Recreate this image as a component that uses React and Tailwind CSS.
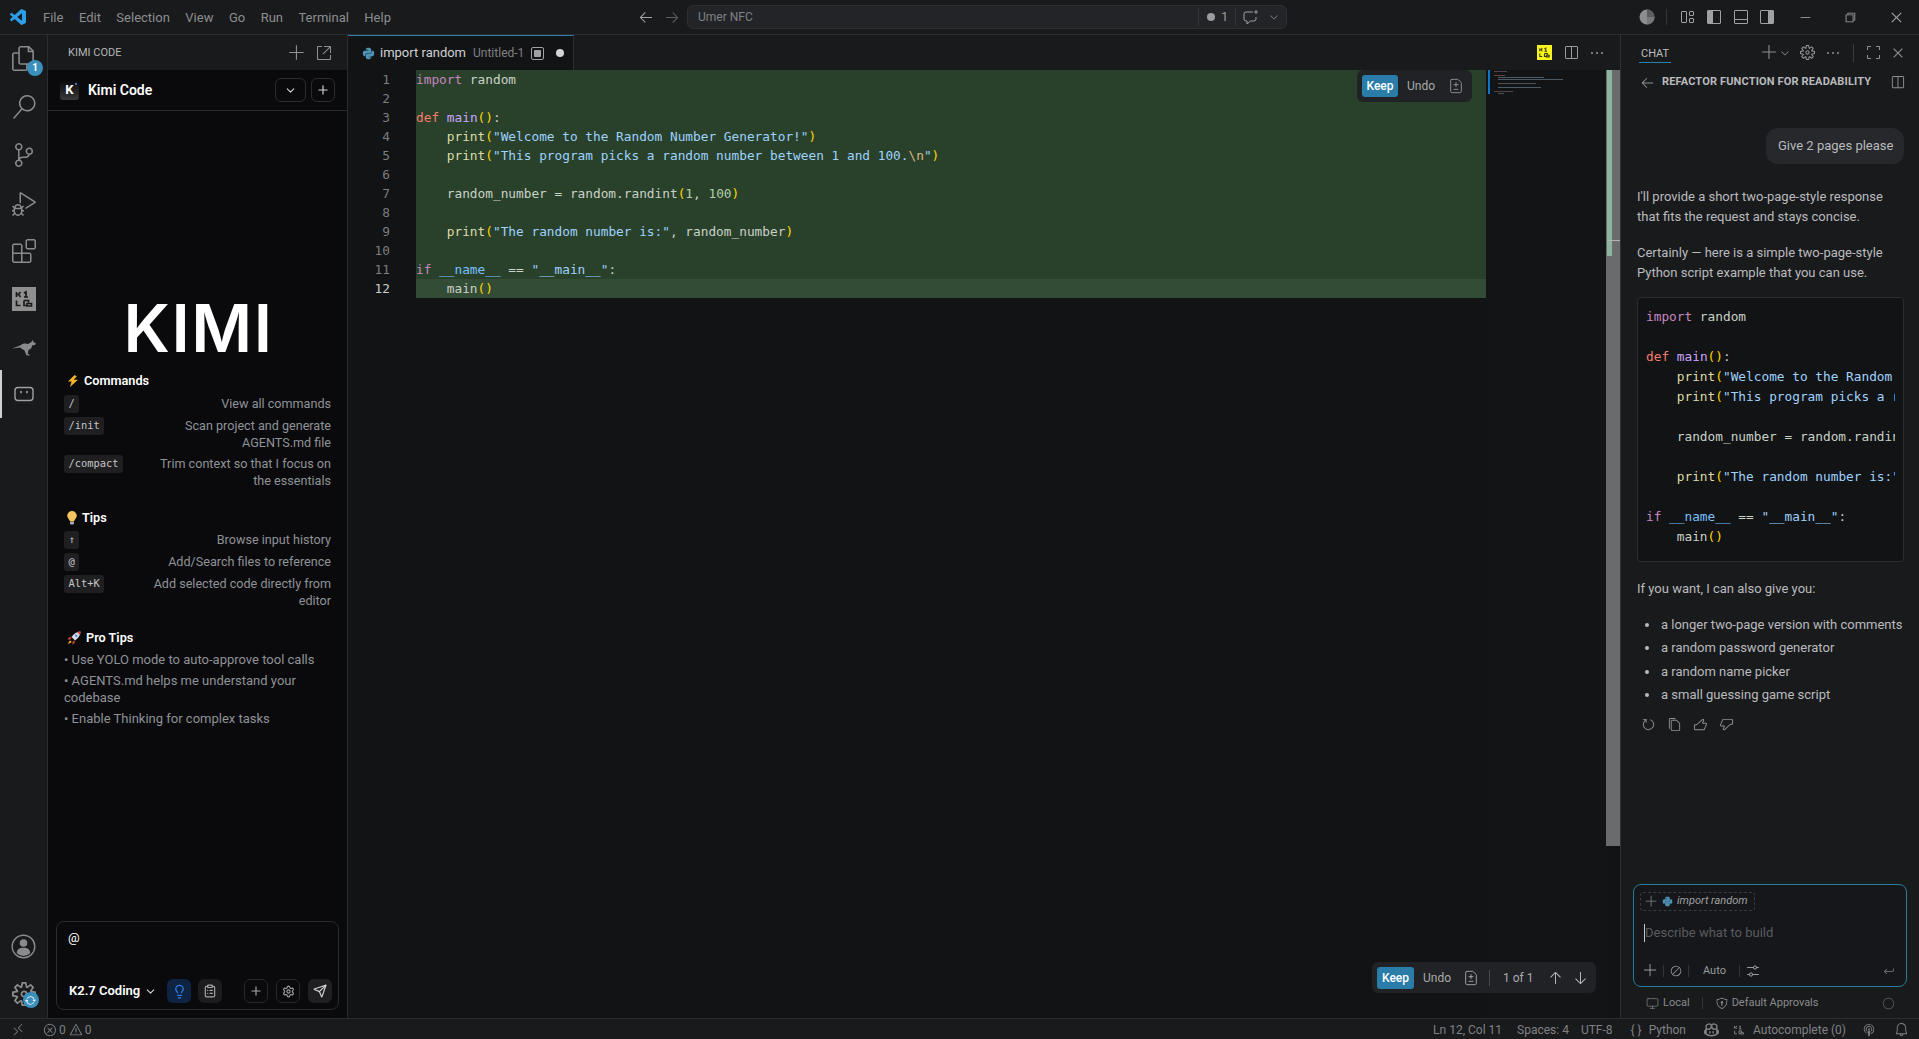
import {
  VscFiles, VscSearch, VscSourceControl, VscDebugAlt, VscExtensions, VscSettingsGear,
  VscRemote, VscError, VscWarning, VscBell, VscSplitHorizontal, VscLayout, VscAdd, VscChevronDown,
  VscEllipsis, VscChromeMinimize, VscChromeRestore, VscChromeClose, VscArrowLeft, VscArrowRight,
  VscArrowUp, VscArrowDown, VscLayoutSidebarLeft, VscLayoutPanelOff, VscLayoutSidebarRight,
  VscRefresh, VscCopy, VscThumbsup, VscThumbsdown, VscShield, VscBroadcast,
  VscSettings, VscNewline, VscCircleLarge, VscLinkExternal, VscCopilot, VscSync, VscCircleSlash,
} from "react-icons/vsc";
import { FaPython } from "react-icons/fa";
import { Lightbulb, ClipboardList, Plus, Settings, Send, ChevronDown, Monitor, FileDiff } from "lucide-react";

const kw = "text-[#c586c0]";
const def = "text-[#f97b6d]";
const fn = "text-[#c8a6ff]";
const pr = "text-[#dcdcaa]";
const str = "text-[#9fd2ff]";
const par = "text-[#ffd700]";
const num = "text-[#b5cea8]";
const txt = "text-[#c9d1c9]";
const esc = "text-[#d7ba7d]";
const dun = "text-[#79c0ff]";

const CODE = [
  [["import", kw], [" random", txt]],
  [],
  [["def", def], [" ", txt], ["main", fn], ["()", par], [":", txt]],
  [["    print", pr], ["(", par], ['"Welcome to the Random Number Generator!"', str], [")", par]],
  [["    print", pr], ["(", par], ['"This program picks a random number between 1 and 100.', str], ["\\n", esc], ['"', str], [")", par]],
  [],
  [["    random_number = random.randint", txt], ["(", par], ["1", num], [", ", txt], ["100", num], [")", par]],
  [],
  [["    print", pr], ["(", par], ['"The random number is:"', str], [", random_number", txt], [")", par]],
  [],
  [["if", kw], [" ", txt], ["__name__", dun], [" == ", txt], ['"__main__"', str], [":", txt]],
  [["    main", txt], ["()", par]],
];

function CodeLine({ tokens }) {
  return (
    <>
      {tokens.map((t, i) => (
        <span key={i} className={t[1]}>{t[0]}</span>
      ))}
    </>
  );
}

function KiloIcon({ size = 24, bg = "#8f8f8f", fg = "#1a1b1d" }) {
  return (
    <svg width={size} height={size} viewBox="0 0 24 24">
      <rect width="24" height="24" fill={bg} />
      <path
        d="M4.5 5v5M4.5 7.5h2l2-2.5M6.5 7.5l2 2.5M12 6l2-1v5M12 10h4M4.5 13.5v5h4M12 13.5h4.5v2M12 13.5v5h2M15 16.5h4.5v2.5H15z"
        fill="none"
        stroke={fg}
        strokeWidth="1.7"
      />
    </svg>
  );
}

function Kangaroo() {
  return (
    <svg width="24" height="17" viewBox="0 0 24 17" fill="#8a8b8d">
      <path d="M0 9.5 L8 6.5 C10.5 4 14 4 16 5 L19.5 3 L20.5 .8 L21.5 3 L24 4.4 L23 6 L20.3 6.3 L19.3 9.2 L16.5 11 L15.8 14.5 L18.3 16.5 L14.4 16.2 L12.5 11.5 L8 8.6 Z" />
    </svg>
  );
}

function RobotIcon() {
  return (
    <svg width="20" height="16" viewBox="0 0 20 16" fill="none" stroke="#a0a1a3" strokeWidth="1.4">
      <rect x="1" y="1.5" width="18" height="13" rx="3" />
      <path d="M7 5v2.2M13 5v2.2" strokeWidth="1.6" />
    </svg>
  );
}

function AccountIcon() {
  return (
    <svg width="25" height="25" viewBox="0 0 25 25">
      <circle cx="12.5" cy="12.5" r="11.3" fill="none" stroke="#8a8b8d" strokeWidth="1.4" />
      <circle cx="12.5" cy="9" r="3.8" fill="#8a8b8d" />
      <path d="M5.8 19.2c0-3.6 2.6-5.4 6.7-5.4s6.7 1.8 6.7 5.4a9.6 9.6 0 0 1-13.4 0z" fill="#8a8b8d" />
    </svg>
  );
}

function ThemeIcon() {
  return (
    <svg width="16" height="16" viewBox="0 0 16 16">
      <circle cx="8" cy="8" r="7.5" fill="#8c8d8f" />
      <path d="M8 .5a7.5 7.5 0 0 1 0 15z" fill="#5c5d5f" />
      <path d="M8 8 15.5 8a7.5 7.5 0 0 1-7.5 7.5z" fill="#77787a" />
    </svg>
  );
}

function FullscreenIcon() {
  return (
    <svg width="13" height="13" viewBox="0 0 13 13" fill="none" stroke="#8f9092">
      <path d="M.5 4V.5H4M9 .5h3.5V4M12.5 9v3.5H9M4 12.5H.5V9" />
    </svg>
  );
}

function Bolt() {
  return (
    <svg width="12" height="12" viewBox="0 0 12 12" fill="#f5b32a">
      <path d="M7.5 0 1 6.6h3.6L3 12l8-7.2H6.6L9.8 1.4z" />
    </svg>
  );
}

function Bulb() {
  return (
    <svg width="10" height="14" viewBox="0 0 10 14">
      <path d="M5 0a4.8 4.8 0 0 0-4.8 4.8C.2 7.2 2.6 8.4 3 10.4h4c.4-2 2.8-3.2 2.8-5.6A4.8 4.8 0 0 0 5 0z" fill="#f7c35f" />
      <rect x="3" y="10.8" width="4" height="2.6" rx="1" fill="#a9acb0" />
    </svg>
  );
}

function Rocket() {
  return (
    <svg width="14" height="14" viewBox="0 0 14 14">
      <path d="M13.5.5C9.8.6 6.8 2.4 4.6 6l3.4 3.4c3.6-2.2 5.4-5.2 5.5-8.9z" fill="#d9dde2" />
      <circle cx="9.2" cy="4.8" r="1.3" fill="#4a90d9" />
      <path d="M13.5.5c-1.3 0-2.4.2-3.5.6L12.9 4c.4-1.1.6-2.2.6-3.5z" fill="#e0473c" />
      <path d="M4.6 6 1.6 6.6 .5 8.6l3-.2zM8 9.4l-.6 3-2 1.1.2-3z" fill="#c9453b" />
      <path d="M3.4 9.4C2 10 1.4 11.4 1 13c1.6-.4 3-1 3.6-2.4z" fill="#f5a623" />
    </svg>
  );
}

function Kbd({ children }) {
  return (
    <span className="h-[18px] shrink-0 rounded-[3px] bg-[#1f1f22] px-[4.5px] font-['DejaVu_Sans_Mono',monospace] text-[10.4px] leading-[17px] text-[#c4c5c7]">
      {children}
    </span>
  );
}

function HelpRow({ k, children }) {
  return (
    <div className="flex items-start justify-between">
      <Kbd>{k}</Kbd>
      <div className="whitespace-nowrap text-right text-[12.6px] leading-[17px] text-[#8f9297]">{children}</div>
    </div>
  );
}

function Heading({ icon, children }) {
  return (
    <div className="flex h-[20px] items-center gap-[5px] pl-[3px] pt-[2px] text-[12.7px] font-semibold text-white">
      {icon}
      <span>{children}</span>
    </div>
  );
}

function ActivityBar() {
  const icon = "text-[#8a8b8d]";
  return (
    <div className="flex w-[48px] shrink-0 flex-col items-center border-r border-[#2b2c2f] bg-[#191a1c]">
      <div className="relative mt-[11px] flex h-[24px] items-center justify-center">
        <VscFiles size={25} className={icon} />
        <span className="absolute left-[16px] top-[14px] flex h-[16px] w-[16px] items-center justify-center rounded-full bg-[#3a8fbd] text-[10px] font-bold leading-none text-white">1</span>
      </div>
      <VscSearch size={24} className={`mt-[25px] ${icon}`} />
      <VscSourceControl size={24} className={`mt-[24px] ${icon}`} />
      <VscDebugAlt size={24} className={`mt-[25px] ${icon}`} />
      <VscExtensions size={24} className={`mt-[23px] ${icon}`} />
      <div className="mt-[24px]"><KiloIcon /></div>
      <div className="mt-[28px]"><Kangaroo /></div>
      <div className="relative mt-[14px] flex h-[48px] w-full items-center justify-center">
        <span className="absolute bottom-0 left-0 top-0 w-[2px] bg-[#d0d0d0]" />
        <RobotIcon />
      </div>
      <div className="mt-auto"><AccountIcon /></div>
      <div className="relative mb-[12px] mt-[23px] flex h-[24px] items-center justify-center">
        <VscSettingsGear size={24} className={icon} />
        <span className="absolute left-[11px] top-[10px] flex h-[16px] w-[16px] items-center justify-center rounded-full bg-[#3a8fbd]">
          <VscSync size={11} className="text-white" />
        </span>
      </div>
    </div>
  );
}

function KimiSidebar() {
  const iconBtn = "flex h-[24px] w-[24px] items-center justify-center rounded-[6px]";
  return (
    <div className="flex w-[300px] shrink-0 flex-col border-r border-[#2b2c2f] bg-[#191a1c]">
      <div className="flex h-[35px] shrink-0 items-center pl-[20px] pr-[15px] pt-[1px] text-[11px] text-[#b4b5b7]">
        <span>KIMI CODE</span>
        <VscAdd size={18} className="ml-auto text-[#8f9092]" />
        <VscLinkExternal size={16} className="ml-[10px] text-[#8f9092]" />
      </div>
      <div className="flex min-h-0 flex-1 flex-col bg-[#0a0a0c]">
        <div className="flex h-[41px] shrink-0 items-center border-b border-[#2a2b2e] pl-[12px] pr-[12px]">
          <div className="relative flex h-[19px] w-[19px] items-center justify-center rounded-[3px] bg-gradient-to-b from-[#0c0c0e] to-[#3a3a3c] text-[13px] font-bold text-white">
            K
            <span className="absolute right-[2px] top-[2px] h-[2px] w-[2px] rounded-full bg-[#3a9bff]" />
          </div>
          <span className="ml-[9px] text-[14px] font-semibold text-white">Kimi Code</span>
          <div className="ml-auto flex h-[24px] w-[31px] items-center justify-center rounded-[6px] border border-[#2b2c30]">
            <ChevronDown size={13} className="text-[#d5d5d5]" />
          </div>
          <div className="ml-[5px] flex h-[24px] w-[24px] items-center justify-center rounded-[6px] border border-[#2b2c30]">
            <Plus size={14} className="text-[#d5d5d5]" />
          </div>
        </div>
        <div className="mt-[184px] flex h-[66px] items-center justify-center pl-[2px] font-['Inter',sans-serif] text-[66px] font-semibold leading-none tracking-[1.5px] text-white">
          KIMI
        </div>
        <div className="mt-[9px] flex flex-col px-[16px]">
          <Heading icon={<Bolt />}>Commands</Heading>
          <div className="mt-[5px] flex flex-col gap-[4px]">
            <HelpRow k="/">View all commands</HelpRow>
            <HelpRow k="/init">Scan project and generate<br />AGENTS.md file</HelpRow>
            <HelpRow k="/compact">Trim context so that I focus on<br />the essentials</HelpRow>
          </div>
          <div className="mt-[18px]"><Heading icon={<Bulb />}>Tips</Heading></div>
          <div className="mt-[4px] flex flex-col gap-[4px]">
            <HelpRow k="↑">Browse input history</HelpRow>
            <HelpRow k="@">Add/Search files to reference</HelpRow>
            <HelpRow k="Alt+K">Add selected code directly from<br />editor</HelpRow>
          </div>
          <div className="mt-[18px]"><Heading icon={<Rocket />}>Pro Tips</Heading></div>
          <div className="mt-[4px] flex flex-col gap-[4px] text-[13px] leading-[17px] text-[#8f9297]">
            <div>• Use YOLO mode to auto-approve tool calls</div>
            <div>• AGENTS.md helps me understand your<br />codebase</div>
            <div>• Enable Thinking for complex tasks</div>
          </div>
        </div>
        <div className="mx-[8px] mb-[8px] mt-auto flex h-[89px] flex-col rounded-[8px] border border-[#2a2b2e] pl-[11px] pr-[6px]">
          <div className="mt-[7px] text-[13px] leading-[18px] text-white">@</div>
          <div className="mt-auto mb-[6px] ml-[1px] flex items-center">
            <span className="text-[13px] font-semibold text-white">K2.7 Coding</span>
            <ChevronDown size={13} className="ml-[4px] text-[#d5d5d5]" />
            <div className={`${iconBtn} ml-[10px] bg-[#0e2442]`}>
              <Lightbulb size={15} className="text-[#2f7de1]" />
            </div>
            <div className={`${iconBtn} ml-[7px] bg-[#1c1c1e]`}>
              <ClipboardList size={14} className="text-[#a5a6a8]" />
            </div>
            <div className={`${iconBtn} ml-auto border border-[#26272a]`}>
              <Plus size={14} className="text-[#a5a6a8]" />
            </div>
            <div className={`${iconBtn} ml-[8px] border border-[#26272a]`}>
              <Settings size={13} className="text-[#a5a6a8]" />
            </div>
            <div className={`${iconBtn} ml-[8px] bg-[#1f1f22]`}>
              <Send size={14} className="text-[#d5d5d5]" />
            </div>
          </div>
        </div>
      </div>
    </div>
  );
}

function Minimap() {
  // one row per code line: indent, length in chars, colour
  const rows = [
    [0, 13, "#a98ab0"], [0, 0, ""], [0, 11, "#e08a80"], [4, 46, "#9fc4de"], [4, 65, "#9fc4de"], [0, 0, ""],
    [4, 38, "#a8aca8"], [0, 0, ""], [4, 43, "#9fc4de"], [0, 0, ""], [0, 19, "#a98ab0"], [4, 6, "#a8aca8"],
  ];
  return (
    <div className="relative w-[120px] shrink-0 bg-[#131415]">
      <div className="absolute left-[2px] top-0 h-[24px] w-[2px] bg-[#0a78c9]" />
      {rows.map((r, i) =>
        r[1] ? (
          <div key={i} className="absolute h-[1px] opacity-40" style={{ left: r[0] + 8, top: i * 2 + 1, width: r[1], background: r[2] }} />
        ) : null
      )}
    </div>
  );
}

function KeepButton({ w }) {
  return (
    <span className={`flex h-[22px] items-center justify-center rounded-[3px] bg-[#2a7da8] text-[12px] font-medium text-white ${w}`}>Keep</span>
  );
}

function Editor() {
  return (
    <div className="flex min-w-0 flex-1 flex-col bg-[#121314]">
      <div className="flex h-[35px] shrink-0 items-stretch bg-[#191a1c]">
        <div className="flex w-[226px] items-center border-r border-t border-r-[#2b2c2f] border-t-[#2f80a8] bg-[#121314] pl-[14px] text-[13px]">
          <FaPython size={13} className="text-[#4f93b8]" />
          <span className="ml-[5px] text-[#d0d1d3]">import random</span>
          <span className="ml-[7px] text-[12px] text-[#808184]">Untitled-1</span>
          <span className="ml-[7px] flex h-[13px] w-[13px] items-center justify-center rounded-[2px] border border-[#a0a1a3]">
            <span className="h-[7px] w-[7px] rounded-[1px] bg-[#a0a1a3]" />
          </span>
          <span className="ml-[12px] h-[8px] w-[8px] rounded-full bg-[#d4d4d4]" />
        </div>
        <div className="ml-auto flex items-center pr-[15px]">
          <KiloIcon size={15} bg="#f7f31f" fg="#3a3a10" />
          <VscSplitHorizontal size={16} className="ml-[11px] text-[#9a9b9d]" />
          <VscEllipsis size={16} className="ml-[10px] text-[#9a9b9d]" />
        </div>
      </div>
      <div className="relative flex min-h-0 flex-1">
        <div className="w-[68px] shrink-0 font-['DejaVu_Sans_Mono',monospace] text-[12.79px] leading-[19px]">
          {CODE.map((_, i) => (
            <div key={i} className={`h-[19px] pr-[26px] text-right ${i === 11 ? "text-[#cccccc]" : "text-[#7c7d80]"}`}>{i + 1}</div>
          ))}
        </div>
        <div className="w-[1070px] shrink-0 font-['DejaVu_Sans_Mono',monospace] text-[12.79px] leading-[19px]">
          {CODE.map((line, i) => (
            <div key={i} className={`h-[19px] whitespace-pre ${i === 11 ? "bg-[#334c35]" : "bg-[#29412a]"}`}>
              <CodeLine tokens={line} />
            </div>
          ))}
        </div>
        <Minimap />
        <div className="relative w-[14px] shrink-0">
          <div className="h-[776px] w-full bg-[#6b6b6b]" />
          <div className="absolute left-[1px] top-0 h-[186px] w-[5px] bg-[#8cb5a0]" />
          <div className="absolute left-[1px] right-0 top-[170px] h-[1px] bg-[#b5b5b5]" />
        </div>
        <div className="absolute left-[1009px] top-0 flex h-[32px] w-[115px] items-center rounded-[6px] bg-[#202225] pl-[5px] text-[12px] text-[#a9aaac]">
          <KeepButton w="w-[36px]" />
          <span className="ml-[9px]">Undo</span>
          <FileDiff size={16} strokeWidth={1.25} className="ml-[13px] text-[#a0a1a3]" />
        </div>
        <div className="absolute left-[1024px] top-[892px] flex h-[31px] w-[224px] items-center rounded-[6px] bg-[#202225] pl-[5px] text-[12px] text-[#a9aaac]">
          <KeepButton w="w-[37px]" />
          <span className="ml-[9px]">Undo</span>
          <FileDiff size={16} strokeWidth={1.25} className="ml-[12px] text-[#b5b6b8]" />
          <span className="ml-[10px] h-[16px] w-[1px] bg-[#4a4b4e]" />
          <span className="ml-[13px]">1 of 1</span>
          <VscArrowUp size={16} className="ml-[13px] text-[#b5b6b8]" />
          <VscArrowDown size={16} className="ml-[9px] text-[#b5b6b8]" />
        </div>
      </div>
    </div>
  );
}

function Chat() {
  const body = "text-[13px] leading-[20px] text-[#b9bbbe]";
  const actions = "text-[#8f9092]";
  return (
    <div className="flex w-[299px] shrink-0 flex-col border-l border-[#2f3033] bg-[#191a1c]">
      <div className="flex h-[35px] shrink-0 items-center pl-[18px] pr-[14px]">
        <span className="flex h-[21px] items-center border-b border-[#2f80a8] px-[2px] pt-[4px] text-[11px] text-[#b9bbbe]">CHAT</span>
        <VscAdd size={17} className={`ml-auto ${actions}`} />
        <VscChevronDown size={12} className={`ml-[1px] ${actions}`} />
        <VscSettingsGear size={15} className={`ml-[9px] ${actions}`} />
        <VscEllipsis size={16} className={`ml-[10px] ${actions}`} />
        <span className="ml-[12px] h-[18px] w-[1px] bg-[#3a3b3e]" />
        <span className="ml-[13px]"><FullscreenIcon /></span>
        <VscChromeClose size={14} className={`ml-[11px] ${actions}`} />
      </div>
      <div className="flex h-[24px] shrink-0 items-center pl-[19px] pr-[14px]">
        <VscArrowLeft size={15} className={actions} />
        <span className="ml-[7px] text-[11px] font-bold tracking-[0.15px] text-[#b9bbbe]">REFACTOR FUNCTION FOR READABILITY</span>
        <VscSplitHorizontal size={15} className={`ml-auto ${actions}`} />
      </div>
      <div className="flex min-h-0 flex-1 flex-col pl-[16px] pr-[15px]">
        <div className="mt-[34px] flex h-[36px] w-[138px] items-center self-end rounded-[12px] bg-[#26282b] pl-[12px] text-[13px] text-[#b9bbbe]">
          Give 2 pages please
        </div>
        <p className={`mt-[23px] ${body}`}>I'll provide a short two-page-style response<br />that fits the request and stays concise.</p>
        <p className={`mt-[16px] ${body}`}>Certainly — here is a simple two-page-style<br />Python script example that you can use.</p>
        <div className="mt-[14px] h-[265px] shrink-0 overflow-hidden rounded-[4px] border border-[#2b2d30] bg-[#121314] pl-[8px] pr-[8px] pt-[9px] font-['DejaVu_Sans_Mono',monospace] text-[12.79px] leading-[20px]">
          <div className="overflow-hidden">
            {CODE.map((line, i) => (
              <div key={i} className="h-[20px] whitespace-pre">
                <CodeLine tokens={line} />
              </div>
            ))}
          </div>
        </div>
        <p className={`mt-[17px] ${body}`}>If you want, I can also give you:</p>
        <ul className="mt-[16px] flex flex-col gap-[3.4px]">
          {["a longer two-page version with comments", "a random password generator", "a random name picker", "a small guessing game script"].map((t) => (
            <li key={t} className={`flex items-center whitespace-nowrap ${body}`}>
              <span className="ml-[8px] mr-[12px] h-[4px] w-[4px] rounded-full bg-[#b9bbbe]" />
              {t}
            </li>
          ))}
        </ul>
        <div className="ml-[4px] mt-[12px] flex items-center gap-[11px] text-[#8f9092]">
          <VscRefresh size={15} />
          <VscCopy size={15} />
          <VscThumbsup size={15} />
          <VscThumbsdown size={15} />
        </div>
        <div className="-ml-[4px] -mr-[3px] mt-auto flex h-[103px] shrink-0 flex-col rounded-[8px] border border-[#2a7a9c] bg-[#15171a]">
          <div className="ml-[6px] mt-[7px] flex h-[19px] w-[115px] items-center rounded-[3px] border border-dashed border-[#3a3b3e] pl-[4px]">
            <VscAdd size={13} className="text-[#858688]" />
            <FaPython size={11} className="ml-[4px] text-[#4f93b8]" />
            <span className="ml-[4px] text-[11px] italic text-[#a0a1a3]">import random</span>
          </div>
          <div className="ml-[10px] mt-[13px] flex h-[18px] items-center text-[13px] text-[#5a5b5e]">
            <span className="h-[18px] w-[1px] bg-[#c8c8c8]" />
            Describe what to build
          </div>
          <div className="mt-auto mb-[7px] flex items-center pl-[9px] pr-[9px] text-[#9a9b9d]">
            <VscAdd size={15} />
            <span className="ml-[5px] h-[12px] w-[1px] bg-[#333437]" />
            <VscCircleSlash size={12} className="ml-[6px]" />
            <span className="ml-[6px] h-[12px] w-[1px] bg-[#333437]" />
            <span className="ml-[14px] text-[11px]">Auto</span>
            <span className="ml-[13px] h-[12px] w-[1px] bg-[#333437]" />
            <VscSettings size={16} className="ml-[5px]" />
            <VscNewline size={16} className="ml-auto text-[#66676a]" />
          </div>
        </div>
        <div className="mb-[5px] mt-[6px] flex h-[20px] shrink-0 items-center pl-[9px] pr-[9px] text-[11px] text-[#8a8b8d]">
          <Monitor size={13} strokeWidth={1.25} />
          <span className="ml-[4px]">Local</span>
          <span className="ml-[12px] h-[12px] w-[1px] bg-[#333437]" />
          <VscShield size={13} className="ml-[12px]" />
          <span className="ml-[4px]">Default Approvals</span>
          <VscCircleLarge size={13} className="ml-auto text-[#5c5d60]" />
        </div>
      </div>
    </div>
  );
}

export default function App() {
  const menu = ["File", "Edit", "Selection", "View", "Go", "Run", "Terminal", "Help"];
  return (
    <div className="flex h-screen w-screen flex-col overflow-hidden bg-[#191a1c] font-['Roboto',sans-serif] text-[13px]">
      {/* Title bar */}
      <div className="flex h-[35px] shrink-0 items-center border-b border-[#2b2c2f] pl-[10px] text-[#8c8d90]">
        <svg width="16" height="16" viewBox="0 0 24 24" fill="#2a9fe8">
          <path d="M23.15 2.587L18.21.21a1.494 1.494 0 0 0-1.705.29l-9.46 8.63-4.12-3.128a.999.999 0 0 0-1.276.057L.327 7.261A1 1 0 0 0 .326 8.74L3.899 12 .326 15.26a1 1 0 0 0 .001 1.479L1.65 17.94a.999.999 0 0 0 1.276.057l4.12-3.128 9.46 8.63a1.492 1.492 0 0 0 1.704.29l4.942-2.377A1.5 1.5 0 0 0 24 20.06V3.939a1.5 1.5 0 0 0-.85-1.352zm-5.146 14.861L10.826 12l7.178-5.448v10.896z" />
        </svg>
        <div className="ml-[17px] flex w-[348px] items-center justify-between pt-[2px] text-[13px]">
          {menu.map((m) => <span key={m}>{m}</span>)}
        </div>
        <VscArrowLeft size={16} className="ml-[247px] text-[#a0a1a3]" />
        <VscArrowRight size={16} className="ml-[10px] text-[#5c5d60]" />
        <div className="ml-[7px] flex h-[24px] w-[600px] items-center rounded-[6px] border border-[#2e2f32] bg-[#232427] pl-[10px] text-[12px] text-[#808184]">
          <span>Umer NFC</span>
          <span className="ml-auto h-[18px] w-[1px] bg-[#333437]" />
          <span className="ml-[8px] h-[8px] w-[8px] rounded-full bg-[#9a9b9d]" />
          <span className="ml-[6px] text-[#a0a1a3]">1</span>
          <span className="ml-[7px] h-[18px] w-[1px] bg-[#333437]" />
          <svg width="17" height="17" viewBox="0 0 17 17" fill="none" stroke="#a0a1a3" className="ml-[6px]">
            <path d="M11 3H4a2 2 0 0 0-2 2v5a2 2 0 0 0 2 2h1v3l3.5-3H12a2 2 0 0 0 2-2V8" />
            <path d="M14 1v4M12 3h4" strokeWidth=".9" />
          </svg>
          <VscChevronDown size={12} className="ml-[9px] mr-[6px] text-[#808184]" />
        </div>
        <div className="ml-auto flex items-center pr-[15px] text-[#a0a1a3]">
          <ThemeIcon />
          <span className="ml-[11px] h-[16px] w-[1px] bg-[#333437]" />
          <VscLayout size={16} className="ml-[12px]" />
          <VscLayoutSidebarLeft size={16} className="ml-[11px]" />
          <VscLayoutPanelOff size={16} className="ml-[11px]" />
          <VscLayoutSidebarRight size={16} className="ml-[10px]" />
          <VscChromeMinimize size={14} className="ml-[23px]" />
          <VscChromeRestore size={14} className="ml-[31px]" />
          <VscChromeClose size={15} className="ml-[32px]" />
        </div>
      </div>

      {/* Main */}
      <div className="flex min-h-0 flex-1">
        <ActivityBar />
        <KimiSidebar />
        <Editor />
        <Chat />
      </div>

      {/* Status bar */}
      <div className="flex h-[21px] shrink-0 items-center border-t border-[#2b2c2f] bg-[#191a1c] pt-[1px] text-[12px] text-[#808184]">
        <VscRemote size={14} className="ml-[11px]" />
        <VscError size={14} className="ml-[18px]" />
        <span className="ml-[2px]">0</span>
        <VscWarning size={14} className="ml-[3px]" />
        <span className="ml-[2px]">0</span>
        <span className="ml-auto">Ln 12, Col 11</span>
        <span className="ml-[15px]">Spaces: 4</span>
        <span className="ml-[12px]">UTF-8</span>
        <span className="ml-[18px]">{"{ }"}</span>
        <span className="ml-[7px]">Python</span>
        <VscCopilot size={15} className="ml-[18px]" />
        <span className="ml-[13px]"><KiloIcon size={14} bg="transparent" fg="#808184" /></span>
        <span className="ml-[7px]">Autocomplete (0)</span>
        <VscBroadcast size={14} className="ml-[16px]" />
        <VscBell size={15} className="ml-[18px] mr-[10px]" />
      </div>
    </div>
  );
}
